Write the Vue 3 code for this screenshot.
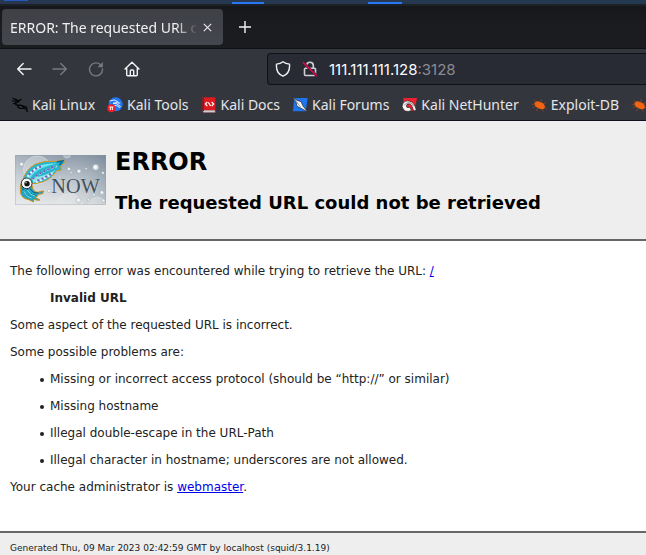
<script setup>
const bookmarks = [
  { label: 'Kali Linux', icon: 'dragon' },
  { label: 'Kali Tools', icon: 'tools' },
  { label: 'Kali Docs', icon: 'docs' },
  { label: 'Kali Forums', icon: 'forums' },
  { label: 'Kali NetHunter', icon: 'nethunter' },
  { label: 'Exploit-DB', icon: 'bug' },
  { label: '', icon: 'bug' },
]
const problems = [
  'Missing or incorrect access protocol (should be “http://” or similar)',
  'Missing hostname',
  'Illegal double-escape in the URL-Path',
  'Illegal character in hostname; underscores are not allowed.',
]
const bubbles = [
  [65, 73, 6], [287, 82, 9], [237, 94, 6], [207, 87, 5], [259, 86, 3], [309, 99, 4],
  [236, 181, 8], [306, 158, 6], [283, 165, 4], [266, 180, 4], [214, 98, 3], [148, 153, 5],
  [311, 182, 5], [75, 98, 3], [248, 118, 3], [180, 112, 3],
]
</script>

<template>
  <div class="window">
    <div class="panel"><i class="glow"></i><i class="task first"></i><i class="task second"></i></div>

    <div class="tabs">
      <div class="tab">
        <span class="tab-title">ERROR: The requested URL could not be retrieved</span>
        <button class="tab-close" aria-label="Close tab">
          <svg width="9" height="9" viewBox="0 0 9 9"><path d="M.8.8l7.4 7.4M8.2.8L.8 8.2" stroke="#e6e6e8" stroke-width="1.2" /></svg>
        </button>
      </div>
      <button class="new-tab" aria-label="New tab">
        <svg width="12" height="12" viewBox="0 0 12 12"><path d="M6 0v12M0 6h12" stroke="#f4f4f5" stroke-width="1.4" /></svg>
      </button>
    </div>

    <div class="toolbar">
      <nav class="nav">
        <button aria-label="Back">
          <svg viewBox="0 0 16 16"><path d="M15 8H2M7.2 2.5L1.7 8l5.5 5.5" fill="none" stroke="#f4f4f5" stroke-width="1.4" stroke-linecap="round" stroke-linejoin="round" /></svg>
        </button>
        <button aria-label="Forward">
          <svg viewBox="0 0 16 16"><path d="M1 8h13M8.8 2.5L14.3 8l-5.5 5.5" fill="none" stroke="#77797f" stroke-width="1.4" stroke-linecap="round" stroke-linejoin="round" /></svg>
        </button>
        <button aria-label="Reload">
          <svg viewBox="0 0 16 16"><path d="M13 4.2A6.5 6.5 0 1 0 14.5 8" fill="none" stroke="#77797f" stroke-width="1.4" stroke-linecap="round" /><path d="M14.8 1v5.2H9.6z" fill="#77797f" /></svg>
        </button>
        <button aria-label="Home">
          <svg viewBox="0 0 16 16"><path d="M1 8l7-6.8L15 8M2.7 7v6.7q0 1 1 1h8.600q1 0 1-1V7M6.300 14.500V10q0-1 1-1h1.400q1 0 1 1v4.500" fill="none" stroke="#f4f4f5" stroke-width="1.4" stroke-linecap="round" stroke-linejoin="round" /></svg>
        </button>
      </nav>
      <div class="urlbar">
        <svg class="shield" viewBox="0 0 16 16"><path d="M8 .8C6.200 2.200 4 2.900 1.500 3.100c-.5 5.600 1.300 10 6.500 12.100 5.200-2.100 7-6.500 6.500-12.100C12 2.900 9.800 2.200 8 .8z" fill="none" stroke="#f0f0f2" stroke-width="1.4" stroke-linejoin="round" /></svg>
        <svg class="lock" viewBox="0 0 16 16"><path d="M4.700 7V4.500a3.300 3.300 0 0 1 6.600 0V7M3.500 7.300h9q1 0 1 1v5.200q0 1-1 1h-9q-1 0-1-1V8.300q0-1 1-1z" fill="none" stroke="#d0d0d5" stroke-width="1.6" /><path d="M1.300 1.600l13.400 13.200" stroke="#282a34" stroke-width="2.600" /><path d="M1.300 1.600l13.400 13.200" stroke="#e4064a" stroke-width="1.500" stroke-linecap="round" /></svg>
        <div class="address">111.111.111.128<span class="port">:3128</span></div>
      </div>
    </div>

    <nav class="bookmarks">
      <a v-for="(b, i) in bookmarks" :key="i" href="#" class="bookmark">
        <svg viewBox="0 0 48 48" aria-hidden="true">
          <g v-if="b.icon === 'dragon'" fill="none" stroke="#050505" stroke-linecap="round" stroke-linejoin="round">
            <path d="M2 4l10 3 7 4M1 12l12 1M4 20l10-2" stroke-width="3" />
            <path d="M8 8q10 2 12 7-9-1-10 5 2 5 12 5 10-1 14 5" stroke-width="4" />
            <path d="M18 11q6 0 9-4M20 25q-6 8 6 9h11q8 1 9 10M32 29q9-2 13 4" stroke-width="4" />
          </g>
          <g v-else-if="b.icon === 'tools'">
            <circle cx="26" cy="22" r="21" fill="#2277f4" />
            <path d="M8 12q14-7 25 2l5 5q-12-5-20 0 12-2 23 10M17 27q12-6 22 5" fill="none" stroke="#dcecff" stroke-width="3" />
            <circle cx="13" cy="34" r="12" fill="#ee2026" />
            <path d="M7 30h12M10 30v9M16 30v9" stroke="#fff" stroke-width="3" />
          </g>
          <g v-else-if="b.icon === 'docs'">
            <path d="M5 1h38v39H5z" fill="#dc1a1f" /><path d="M5 40h38v7H8q-3 0-3-7z" fill="#aa8588" /><path d="M8 41h33v3H8z" fill="#eee" /><path d="M5 1h4v41H5z" fill="#aa0b12" />
            <path d="M19 15l-6 6 6 6M32 15l6 6-6 6M22 16l7 11" fill="none" stroke="#fff" stroke-width="3.500" />
          </g>
          <g v-else-if="b.icon === 'forums'">
            <path d="M7 3h40l-6 40H3z" fill="#1e75ef" />
            <path d="M1 1l14 9 12 4 6 13 14 18-21-12-11-5-3-13z" fill="#f5f5ef" stroke="#1c2530" stroke-width="2" />
            <path d="M13 15l13 15M7 7l11 13" stroke="#69727c" stroke-width="2" />
          </g>
          <g v-else-if="b.icon === 'nethunter'">
            <path d="M7 3h41l-8 39H9z" fill="#f0202f" />
            <path d="M3 28Q7 9 24 12q17 3 22 28l-8 2Q34 24 26 21q-9-2-10 6 1 7 10 4l6 9q-22 11-29-12z" fill="#f7f5f2" stroke="#171a20" stroke-width="2" />
            <path d="M10 25q5-9 15-8 8 1 13 11" fill="none" stroke="#55585e" stroke-width="2" />
          </g>
          <g v-else>
            <path d="M10 19q5-10 17-4 15 3 15 17-8 9-20 1Q10 29 10 19z" fill="#f26411" />
            <path d="M16 17L8 9M13 22H2M15 28L5 32M21 33l-5 9M29 16l2-9M36 20l10-3M40 29l7 6M32 35l5 8" stroke="#a84a19" stroke-width="2" />
          </g>
        </svg>
        <span v-if="b.label">{{ b.label }}</span>
      </a>
    </nav>

    <main class="page">
      <header class="titles">
        <svg class="logo" viewBox="45 45 273 150" role="img" aria-label="Squid">
          <defs>
            <linearGradient id="sky" x1="0" y1="0" x2="0" y2="1"><stop offset="0" stop-color="#8190a0" /><stop offset=".45" stop-color="#b4bdc6" /><stop offset="1" stop-color="#e0e2e3" /></linearGradient>
            <linearGradient id="shine"><stop offset="0" stop-color="#fff" stop-opacity=".3" /><stop offset=".5" stop-color="#fff" stop-opacity=".1" /><stop offset="1" stop-color="#66788a" stop-opacity=".3" /></linearGradient>
          </defs>
          <path d="M45 45h273v150H45z" fill="url(#sky)" />
          <path d="M45 45h273v150H45z" fill="url(#shine)" />
          <g fill="#e5e8e9" fill-opacity=".4" stroke="#eef0f0" stroke-opacity=".6" stroke-width="2">
            <circle cx="112" cy="90" r="42" /><circle cx="208" cy="201" r="40" /><circle cx="90" cy="212" r="38" /><circle cx="292" cy="200" r="28" /><circle cx="201" cy="43" r="11" />
          </g>
          <g v-for="(c, i) in bubbles" :key="i">
            <circle :cx="c[0]" :cy="c[1]" :r="c[2]" fill="#dce2e5" stroke="#8d99a5" stroke-width="1" />
            <circle :cx="c[0] - 1" :cy="c[1] - 1" :r="c[2] / 2" fill="#fafafa" />
          </g>
          <path d="M66 122q-8 16-4 38 6 17 22 18l17 8-1-8q12 4 20 2l-14-8q9-3 9-9l13-2 3-8-12 2q-6 4-13 0-10-6-10-19z" fill="#22a5c2" stroke="#c98b18" stroke-width="3" stroke-linejoin="round" />
          <path d="M68 142q2 23 23 28M79 144q8 20 28 22M90 145q9 17 25 13" fill="none" stroke="#145b81" stroke-width="3" />
          <path d="M70 152q7 17 24 22M82 150q10 17 23 18" fill="none" stroke="#74e8ed" stroke-width="3" />
          <path d="M67 126Q75 90 105 73q30-13 66-9l19-4 4 7-12 12 2 11-14 2q-16 24-42 34-20 6-36 5z" fill="#29b5d0" stroke="#d99518" stroke-width="3" stroke-linejoin="round" />
          <path d="M77 116q16-29 45-40 24-8 48-5-20 3-43 13-28 12-38 34z" fill="#70e6ed" />
          <path d="M98 128q26-5 43-15 16-9 26-23-30 17-67 24z" fill="#91e7e8" />
          <path d="M83 110q15-23 41-32M98 119q29-28 72-40M108 126q28-9 49-26" fill="none" stroke="#d8f7fb" stroke-width="6" stroke-dasharray="7 6" />
          <path d="M87 105q15-20 41-27M98 117q29-26 70-38M112 122q25-9 42-22" fill="none" stroke="#8157b7" stroke-width="6" stroke-dasharray="6 7" />
          <path d="M170 66l18-3-10 13" fill="none" stroke="#126c94" stroke-width="5" />
          <circle cx="80" cy="130" r="16" fill="#f5f7f5" stroke="#34363a" stroke-width="3" /><circle cx="81" cy="131" r="8" fill="#111" /><circle cx="78" cy="128" r="2" fill="#fff" />
          <text x="156" y="160" class="now-light">NOW</text>
          <text x="154" y="158" class="now">NOW</text>
          <path d="M46 46h271v148H46z" fill="none" stroke="#929da7" stroke-opacity=".6" stroke-width="2" />
        </svg>
        <div class="headings">
          <h1>ERROR</h1>
          <h2>The requested URL could not be retrieved</h2>
        </div>
      </header>
      <section class="content">
        <p>The following error was encountered while trying to retrieve the URL: <a href="#">/</a></p>
        <blockquote><b>Invalid URL</b></blockquote>
        <p>Some aspect of the requested URL is incorrect.</p>
        <p>Some possible problems are:</p>
        <ul>
          <li v-for="p in problems" :key="p">{{ p }}</li>
        </ul>
        <p>Your cache administrator is <a href="#">webmaster</a>.</p>
      </section>
      <footer class="footer">Generated Thu, 09 Mar 2023 02:42:59 GMT by localhost (squid/3.1.19)</footer>
    </main>
  </div>
</template>

<style>
body { margin: 0; }
</style>

<style scoped>
* { box-sizing: border-box; }
.window { display: flex; flex-direction: column; min-height: 100vh; overflow: hidden; font-family: "Noto Sans", sans-serif; font-size: 14px; color: #e4e5e7; }
button { display: flex; align-items: center; justify-content: center; padding: 0; border: 0; background: none; }
.panel { position: relative; height: 6px; background: linear-gradient(90deg, #28374f, #233950); border-bottom: 2px solid #1c2126; }
.task { position: absolute; top: 2px; height: 2px; width: 32px; background: #2777f7; }
.glow { position: absolute; left: 4px; top: 0; width: 24px; height: 1px; background: #2458b8; }
.first { left: 232px; }
.second { left: 368px; width: 34px; }
.tabs { display: flex; align-items: center; height: 43px; padding: 0 2px; background: linear-gradient(#15171a, #1b1c20 50%); border-bottom: 1px solid #101114; }
.tab { display: flex; align-items: center; width: 221px; height: 36px; padding: 0 7px 0 8px; border-radius: 4px; background: linear-gradient(#3e4046, #45474e); }
.tab-title { flex: 1; min-width: 0; overflow: hidden; white-space: nowrap; color: #f0f0f1; mask-image: linear-gradient(90deg, #000 88%, transparent); }
.tab-close { width: 18px; height: 18px; }
.new-tab { width: 28px; height: 28px; margin-left: 8px; }
.toolbar { display: flex; align-items: center; gap: 127px; height: 40px; padding-left: 16px; background: #34363e; }
.nav { display: flex; gap: 20px; }
.nav button { width: 16px; height: 16px; }
.nav svg, .shield, .lock, .bookmark svg { display: block; flex: none; width: 16px; height: 16px; }
.urlbar { display: flex; flex: 1; align-items: center; gap: 11px; height: 32px; padding-left: 7px; border: 1px solid #101116; border-right: 0; border-radius: 4px 0 0 4px; background: #282a34; }
.address { font-family: Inter, "Noto Sans", sans-serif; font-size: 15px; color: #fbfbfe; }
.port { color: #8b8c92; }
.bookmarks { display: flex; align-items: center; gap: 12px; height: 32px; padding-left: 12px; background: #34363e; border-bottom: 1px solid #140d20; }
.bookmark { display: flex; flex: none; align-items: center; gap: 4px; color: #e4e5e7; text-decoration: none; white-space: nowrap; }
.page { display: flex; flex: 1; flex-direction: column; background: #fff; color: #222; font-family: "DejaVu Sans", sans-serif; font-size: 12px; line-height: 15px; }
.titles { display: flex; align-items: center; gap: 9px; height: 120px; padding-left: 15px; background: #eee; border-bottom: 2px solid #666; color: #000; }
.logo { width: 91px; height: 50px; }
.now, .now-light { font: 61px "Liberation Serif", serif; fill: #41515e; }
.now-light { fill: #d5dcde; }
.headings { padding-top: 2px; }
h1 { margin: 0 0 16px; font-size: 24px; line-height: 28px; }
h2 { margin: 0; font-size: 18px; line-height: 22px; }
.content { padding: 11px 10px 24px; }
p, blockquote { margin: 12px 0; }
blockquote { margin-left: 40px; }
ul { margin: 12px 0; padding-left: 30px; list-style: none; }
li { display: flex; align-items: center; gap: 6px; }
li::before { content: ""; width: 4px; height: 4px; border-radius: 50%; background: #222; }
li + li { margin-top: 12px; }
.content a { color: #00e; }
.footer { flex: 1; padding: 8px 10px 0; background: #eee; border-top: 2px solid #666; font-size: 9px; line-height: 14px; }
</style>
